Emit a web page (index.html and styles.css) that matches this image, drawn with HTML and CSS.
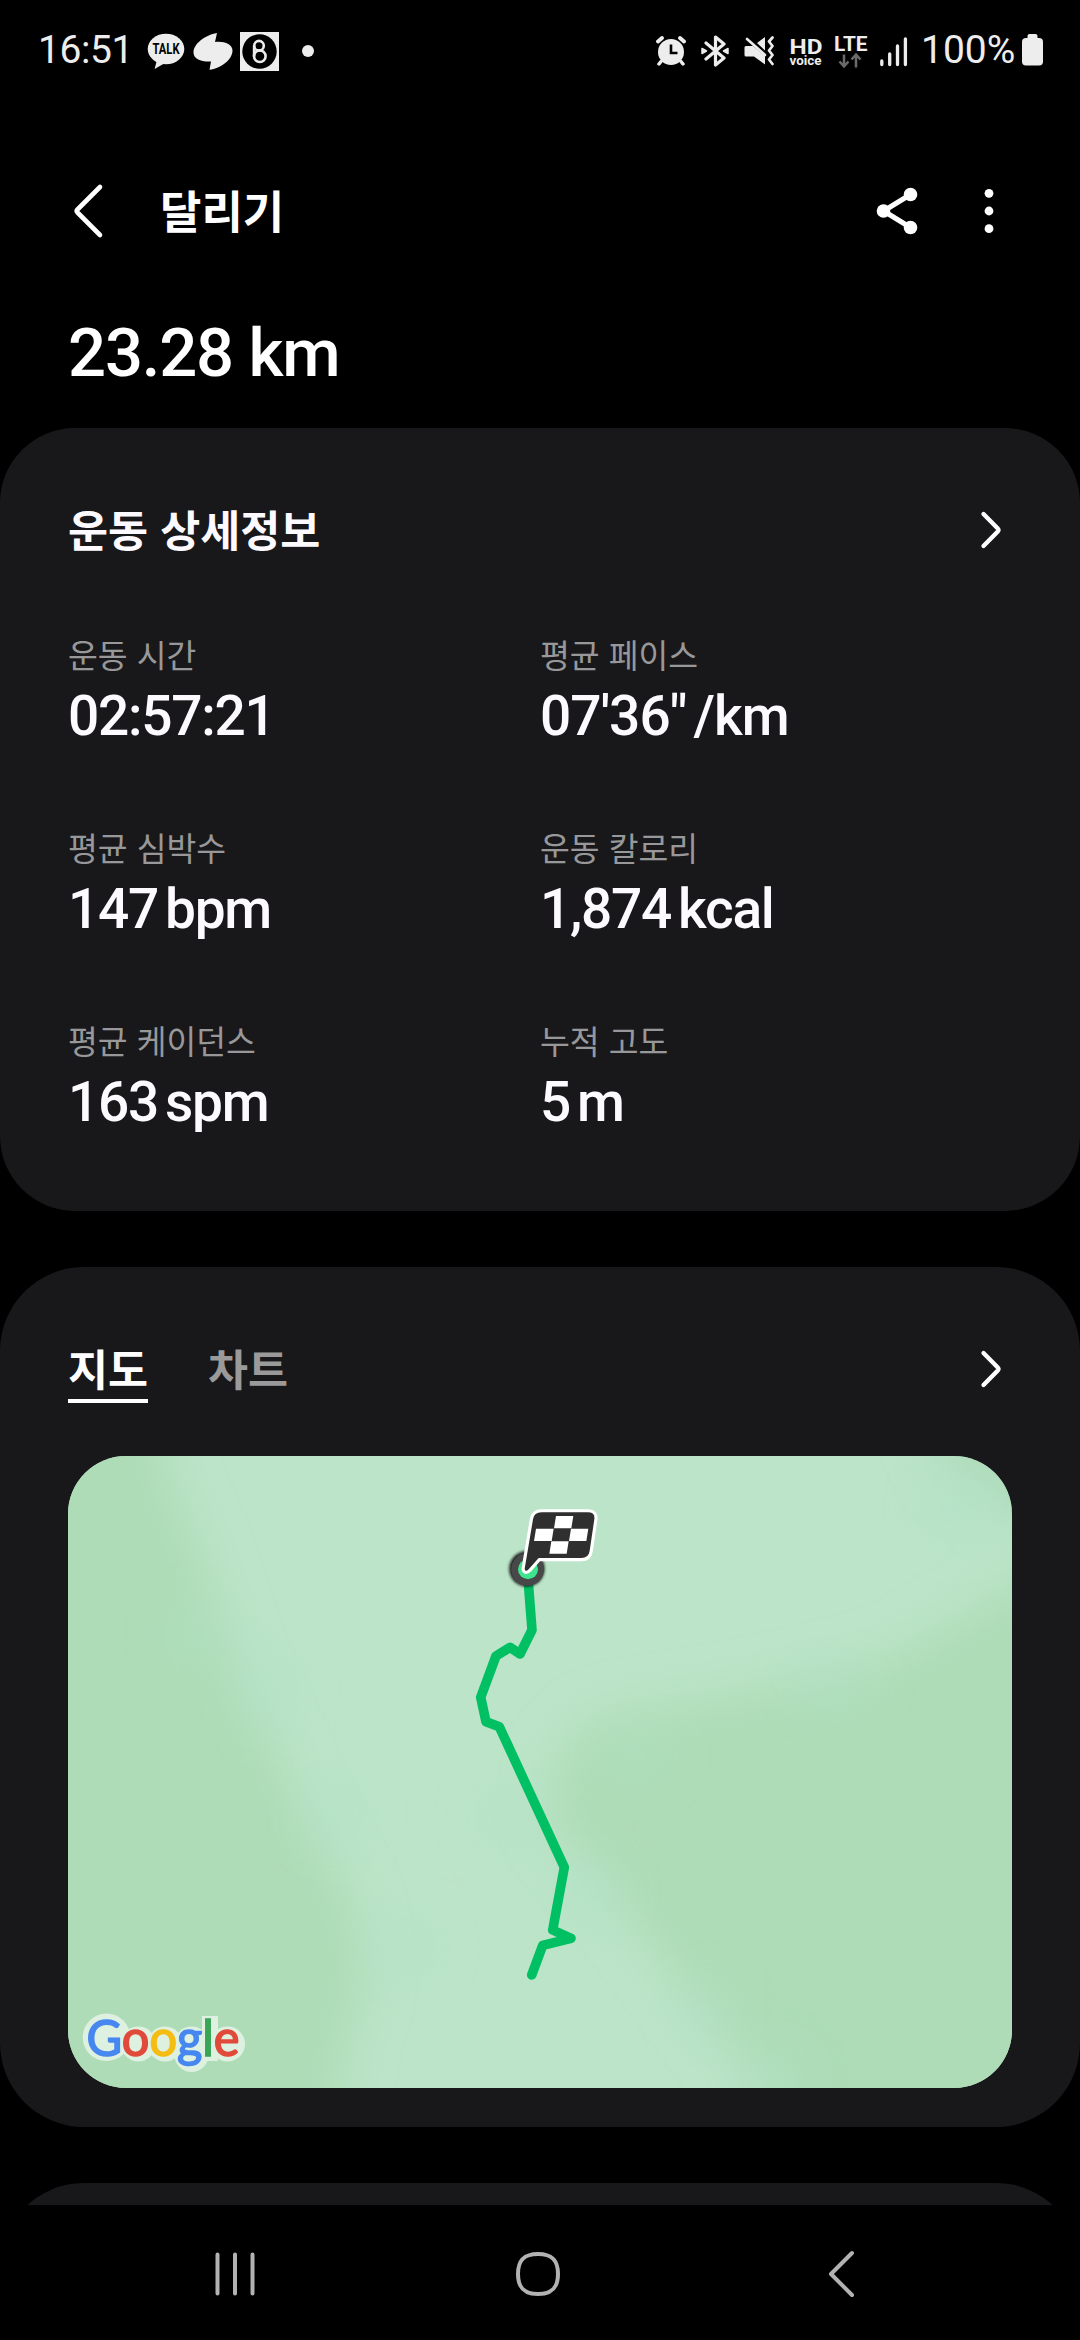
FILE: index.html
```html
<!DOCTYPE html>
<html lang="ko">
<head>
<meta charset="utf-8">
<title>달리기</title>
<link rel="stylesheet" href="styles.css">
</head>
<body>
<div class="screen">
  <header class="status">
    <div class="status-left">
      <span class="clock">16:51</span>
      <svg class="ic-talk" width="38" height="38" viewBox="0 0 38 38">
        <ellipse cx="19" cy="16" rx="18.3" ry="15.3" fill="#ededed"/>
        <path d="M10 27 L7.6 36 L18 30 Z" fill="#ededed"/>
        <text x="5.500" y="21" class="talk-text" textLength="27" lengthAdjust="spacingAndGlyphs">TALK</text>
      </svg>
      <svg class="ic-leaf" width="40" height="40" viewBox="0 0 40 40">
        <path d="M24 1 C12 3 .5 12 .5 20.500 C.5 27 8 30 18 29.500 L16.500 37.800 C28 36.500 39.500 27.500 39.500 18.500 C39.500 12 31 9 22 10 Z" fill="#ededed"/>
      </svg>
      <svg class="ic-eight" width="39" height="39" viewBox="0 0 39 39">
        <rect width="39" height="39" fill="#ededed"/>
        <circle cx="19.500" cy="19.500" r="17.200" fill="#000"/>
        <g fill="none" stroke="#ededed" stroke-width="2.600">
          <circle cx="19" cy="13.700" r="4.800"/>
          <circle cx="19.800" cy="24.200" r="5.800"/>
          <path d="M14.100 13.500 V24.500"/>
        </g>
      </svg>
      <span class="dot"></span>
    </div>
    <div class="status-right">
      <svg class="ic-alarm" width="30" height="30" viewBox="0 0 30 30">
        <circle cx="15" cy="16" r="13" fill="#ededed"/>
        <path d="M5 25.500 L3 28 M25 25.500 L27 28" stroke="#ededed" stroke-width="3.500" stroke-linecap="round"/>
        <path d="M2 5.500 L6 2 M28 5.500 L24 2" stroke="#ededed" stroke-width="3.800" stroke-linecap="round"/>
        <path d="M15 8.500 V17 H21.500" fill="none" stroke="#000" stroke-width="2.600"/>
      </svg>
      <svg class="ic-bt" width="28" height="32" viewBox="0 0 28 32">
        <path d="M5 8 L23 23 L14.500 30 V2 L23 9 L5 24" fill="none" stroke="#ededed" stroke-width="3.200" stroke-linejoin="round" stroke-linecap="round"/>
        <path d="M1 13.500 L5.500 16 L1 18.500 Z M27 13.500 L22.500 16 L27 18.500 Z" fill="#ededed" stroke="#ededed" stroke-width="1.500" stroke-linejoin="round"/>
      </svg>
      <svg class="ic-mute" width="31" height="30" viewBox="0 0 31 30">
        <path d="M2 10 H9 L21 20 V28.500 L10 20.500 H2 Q.5 20.500 .5 19 V11.500 Q.5 10 2 10 Z" fill="#ededed"/>
        <path d="M13 7 L21 1 V14.500 Z" fill="#ededed"/>
        <path d="M3 3 L21 19" stroke="#ededed" stroke-width="2.600" stroke-linecap="round"/>
        <path d="M28.500 1.500 L25 5.500 L28.500 10 L25 14.500 L28.500 19 L25 23.500 L28.500 28" fill="none" stroke="#ededed" stroke-width="2.700" stroke-linejoin="round" stroke-linecap="round"/>
      </svg>
      <svg class="ic-hd" width="34" height="32" viewBox="0 0 34 32">
        <text x="0.500" y="17.500" class="hd-text" textLength="33" lengthAdjust="spacingAndGlyphs">HD</text>
        <text x="0.500" y="28.600" class="voice-text" textLength="32" lengthAdjust="spacingAndGlyphs">voice</text>
      </svg>
      <svg class="ic-lte" width="34" height="40" viewBox="0 -6 34 40">
        <text x="0" y="15.700" class="lte-text" textLength="33.500" lengthAdjust="spacingAndGlyphs">LTE</text>
        <path d="M10 19.500 V31 M5.500 26.500 L10 31.300 L14.500 26.500 M22 32.500 V20 M17.500 24.500 L22 19.700 L26.500 24.500" fill="none" stroke="#6b6b6b" stroke-width="2.500"/>
      </svg>
      <svg class="ic-signal" width="28" height="32" viewBox="0 0 28 32">
        <path d="M1.800 25 V28.500 M9.700 18 V28.500 M17.500 10 V28.500 M25.400 3 V28.500" stroke="#ededed" stroke-width="3.300" stroke-linecap="round"/>
      </svg>
      <span class="percent">100%</span>
      <svg class="ic-batt" width="21" height="32" viewBox="0 0 21 32">
        <rect x="5.500" y="0" width="10" height="8" rx="2" fill="#ededed"/>
        <rect x="0" y="4" width="21" height="27.500" rx="4" fill="#ededed"/>
      </svg>
    </div>
  </header>

  <nav class="topbar">
    <svg class="back" width="32" height="56" viewBox="0 0 32 56">
      <path d="M28 4 L5.500 26.500 Q4 28 5.500 29.500 L28 52" fill="none" stroke="#fff" stroke-width="4.600" stroke-linecap="round"/>
    </svg>
    <h1 class="title">달리기</h1>
    <svg class="share" width="42" height="48" viewBox="0 0 42 48">
      <path d="M34.500 7.500 L7.500 24 L34.500 40.500" fill="none" stroke="#fff" stroke-width="5"/>
      <circle cx="34.500" cy="7.500" r="6.800" fill="#fff"/><circle cx="7.500" cy="24" r="6.800" fill="#fff"/><circle cx="34.500" cy="40.500" r="6.800" fill="#fff"/>
    </svg>
    <svg class="more" width="10" height="46" viewBox="0 0 10 46">
      <circle cx="5" cy="5.300" r="4.400" fill="#fff"/><circle cx="5" cy="23" r="4.400" fill="#fff"/><circle cx="5" cy="40.700" r="4.400" fill="#fff"/>
    </svg>
  </nav>

  <div class="distance">23.28 km</div>

  <main class="cards">
    <section class="card details">
      <div class="card-head">
        <h2 class="card-title">운동 상세정보</h2>
        <svg class="chev" width="22" height="40" viewBox="0 0 22 40">
          <path d="M3.500 4 L18 18.800 Q19 20 18 21.200 L3.500 36" fill="none" stroke="#fff" stroke-width="4.300" stroke-linecap="round"/>
        </svg>
      </div>
      <div class="stats">
        <div class="stat"><div class="label">운동 시간</div><div class="value">02:57:21</div></div>
        <div class="stat"><div class="label">평균 페이스</div><div class="value pace">07'36"<span class="unit">/km</span></div></div>
        <div class="stat"><div class="label">평균 심박수</div><div class="value">147<span class="unit">bpm</span></div></div>
        <div class="stat"><div class="label">운동 칼로리</div><div class="value">1,874<span class="unit">kcal</span></div></div>
        <div class="stat"><div class="label">평균 케이던스</div><div class="value">163<span class="unit">spm</span></div></div>
        <div class="stat"><div class="label">누적 고도</div><div class="value">5<span class="unit">m</span></div></div>
      </div>
    </section>

    <section class="card route">
      <div class="card-head">
        <div class="tabs">
          <span class="tab active">지도</span>
          <span class="tab">차트</span>
        </div>
        <svg class="chev" width="22" height="40" viewBox="0 0 22 40">
          <path d="M3.500 4 L18 18.800 Q19 20 18 21.200 L3.500 36" fill="none" stroke="#fff" stroke-width="4.300" stroke-linecap="round"/>
        </svg>
      </div>
      <svg class="map" width="944" height="632" viewBox="0 0 944 632">
        <defs>
          <filter id="soft" x="-20%" y="-20%" width="140%" height="140%"><feGaussianBlur stdDeviation="24"/></filter>
          <filter id="shade" x="-50%" y="-50%" width="200%" height="200%"><feGaussianBlur stdDeviation="1.600"/></filter>
        </defs>
        <rect width="944" height="632" fill="#bce4c8"/>
        <g filter="url(#soft)">
          <path d="M-80 -80 H85 L98 20 L132 98 L165 200 L205 290 L240 366 L285 450 L298 520 L280 580 L255 720 H-80 Z" fill="#addcb6"/>
          <path d="M1030 80 L890 165 L820 205 L680 237 L530 262 L490 300 L480 365 L520 410 L570 470 L625 545 L690 632 L720 720 H1030 Z" fill="#addcb6"/>
          <path d="M850 -60 L880 15 L944 60 L1030 90 V-60 Z" fill="#afdcba"/>
        </g>
        <g filter="url(#soft)" fill="#b0e2c8" opacity=".75">
          <ellipse cx="201" cy="232" rx="22" ry="36"/><ellipse cx="269" cy="357" rx="22" ry="30"/>
          <ellipse cx="338" cy="491" rx="25" ry="28"/><ellipse cx="125" cy="178" rx="20" ry="24"/>
          <ellipse cx="440" cy="361" rx="26" ry="26"/><ellipse cx="517" cy="437" rx="28" ry="28"/>
          <ellipse cx="705" cy="622" rx="28" ry="24"/><ellipse cx="640" cy="555" rx="22" ry="22"/>
          <ellipse cx="569" cy="300" rx="30" ry="16"/><ellipse cx="762" cy="236" rx="40" ry="16"/>
          <ellipse cx="893" cy="52" rx="30" ry="30"/>
        </g>
        <path d="M459.300 113.300 L464 174 L452 198 L442 191.300 L428 200 L412.700 241.300 L418 265.700 L431.300 270.700 L496.300 411.300 L484.700 474 L503 482.300 L474.700 489.300 L463.700 519" fill="none" stroke="#00c063" stroke-width="9.600" stroke-linejoin="round" stroke-linecap="round"/>
        <circle cx="458.800" cy="112.800" r="17.500" fill="#111" filter="url(#shade)"/>
        <circle cx="459.600" cy="113.300" r="16.500" fill="#484848"/>
        <circle cx="460" cy="113.300" r="10" fill="#3fe48f"/>
        <g transform="translate(372 24) scale(.33333)">
          <path d="M305 97 H443 Q466 97 463 118 L449 212 Q446 234 424 234 H296 L266 268 Q256 278 254 266 L279 118 Q282 97 305 97 Z" fill="#2f2f2f" stroke="#fff" stroke-width="19" stroke-linejoin="round"/>
          <path d="M305 97 H443 Q466 97 463 118 L449 212 Q446 234 424 234 H296 L266 268 Q256 278 254 266 L279 118 Q282 97 305 97 Z" fill="#2f2f2f"/>
          <path d="M348 108 H400 L394 145 H342 Z M288 146 H341 L335 183 H282 Z M393 146 H445 L439 183 H387 Z M334 184 H386 L380 221 H328 Z" fill="#fff"/>
        </g>
        <g fill="#def1e1">
          <circle cx="38.500" cy="581.300" r="23.800"/>
          <circle cx="70.300" cy="588" r="17.500"/><circle cx="97" cy="588" r="17.500"/>
          <circle cx="123.500" cy="588" r="17.500"/><circle cx="123.500" cy="599" r="17"/>
          <rect x="134" y="560" width="16" height="45"/>
          <circle cx="159.500" cy="588" r="17.500"/>
        </g>
        <text class="google" x="18.500" y="599.500" textLength="153" lengthAdjust="spacingAndGlyphs"><tspan class="g-blue">G</tspan><tspan class="g-red">o</tspan><tspan class="g-yellow">o</tspan><tspan class="g-blue">g</tspan><tspan class="g-green">l</tspan><tspan class="g-red">e</tspan></text>
      </svg>
    </section>

    <section class="card next"></section>
  </main>

  <footer class="navbar">
    <svg width="44" height="48" viewBox="0 0 44 48"><path d="M4.500 4.500 V43.500 M22 4.500 V43.500 M39.500 4.500 V43.500" stroke="#b2b2b2" stroke-width="4" stroke-linecap="round"/></svg>
    <svg class="home" width="48" height="48" viewBox="0 0 48 48"><path d="M24 4 C38 4 44 10 44 24 S38 44 24 44 S4 38 4 24 S10 4 24 4 Z" fill="none" stroke="#b2b2b2" stroke-width="4"/></svg>
    <svg width="30" height="50" viewBox="0 0 30 50"><path d="M26 4 L5 25 L26 46" fill="none" stroke="#b2b2b2" stroke-width="4" stroke-linecap="round" stroke-linejoin="round"/></svg>
  </footer>
</div>
</body>
</html>
```
FILE: styles.css
```css
* { box-sizing: border-box; margin: 0; padding: 0; }
body { background: #000; }
svg { display: block; flex: none; }

.screen {
  width: 1080px;
  height: 2340px;
  display: flex;
  flex-direction: column;
  overflow: hidden;
  background: #000;
  color: #fff;
  font-family: Roboto, "Noto Sans CJK KR", sans-serif;
}

.status {
  height: 102px;
  display: flex;
  justify-content: space-between;
  padding: 0 37px 0 38px;
  color: #ededed;
  font-size: 39px;
}
.status-left, .status-right { display: flex; align-items: center; height: 100px; }
.clock { width: 109px; white-space: nowrap; letter-spacing: -.4px; }
.ic-talk { margin-top: 4px; }
.ic-leaf { margin: 4px 0 0 8px; }
.ic-eight { margin: 3px 0 0 7px; }
.dot { width: 12px; height: 12px; border-radius: 50%; background: #ededed; margin: 2px 0 0 23px; }
.ic-alarm { margin: 2px 15px 0 0; }
.ic-bt { margin: 2px 15px 0 0; }
.ic-mute { margin: 2px 14px 0 0; }
.ic-hd { margin: 4px 11px 0 0; }
.ic-lte { margin: -3px 12px 0 0; }
.ic-signal { margin: 3px 13px 0 0; }
.percent { width: 101px; white-space: nowrap; }
.talk-text { font: 700 14px Roboto, sans-serif; fill: #000; }
.hd-text { font: 700 20.500px Roboto, sans-serif; fill: #ededed; }
.voice-text { font: 700 13.500px Roboto, sans-serif; fill: #ededed; }
.lte-text { font: 700 20.700px Roboto, sans-serif; fill: #ededed; }

.topbar {
  height: 218px;
  display: flex;
  align-items: center;
  padding: 0 86px 0 72px;
}
.title {
  flex: 1;
  padding: 0 0 2px 56px;
  font: 700 45px/60px "Noto Sans CJK KR", sans-serif;
}
.share { margin-right: 66px; }

.distance {
  height: 108px;
  padding: 0 68px;
  margin-top: -21px;
  line-height: 108px;
  font-size: 67px;
  font-weight: 500;
  letter-spacing: -1.200px;
}

.cards { height: 1777px; margin-top: 21px; display: flex; flex-direction: column; overflow: hidden; }
.card { flex: none; background: #18181a; }
.card-head {
  display: flex;
  justify-content: space-between;
  align-items: center;
  height: 60px;
  padding: 0 10px 0 0;
}
.card-title { padding-bottom: 2px; font: 700 43.500px/60px "Noto Sans CJK KR", sans-serif; color: #fcfaff; }

.details { height: 783px; border-radius: 75px; padding: 72px 68px 0; }
.stats {
  margin-top: 74px;
  display: grid;
  grid-template-columns: 472px 472px;
  row-gap: 78px;
}
.label { font: 400 32.400px/40px "Noto Sans CJK KR", sans-serif; color: #98989a; }
.value { margin-top: 9px; font-size: 55px; line-height: 66px; font-weight: 500; letter-spacing: -1.250px; color: #fcfaff; white-space: nowrap; }
.pace { letter-spacing: -.9px; }
.unit { margin-left: 7px; }

.route { height: 860px; margin-top: 56px; border-radius: 84px; padding: 71px 68px 0; }
.route .card-head { align-items: flex-start; height: 118px; }
.route .chev { margin-top: 11px; }
.tabs { display: flex; gap: 60px; font: 700 43.500px/60px "Noto Sans CJK KR", sans-serif; color: #9a9a9a; }
.tab { padding-bottom: 1px; border-bottom: 4px solid transparent; }
.tab.active { color: #fff; border-color: #fff; }
.map { border-radius: 58px; }
.google { font: 400 49.500px Lato, sans-serif; stroke-width: 1.600; }
.g-blue { fill: #4687f0; stroke: #4687f0; }
.g-red { fill: #e14a3b; stroke: #e14a3b; }
.g-yellow { fill: #f5bd12; stroke: #f5bd12; }
.g-green { fill: #38a557; stroke: #38a557; }

.next { height: 300px; margin-top: 56px; border-radius: 84px; }

.navbar {
  height: 135px;
  display: flex;
  justify-content: space-between;
  align-items: center;
  padding: 2px 224px 0 213px;
}
.home { margin-right: 8px; }
```
